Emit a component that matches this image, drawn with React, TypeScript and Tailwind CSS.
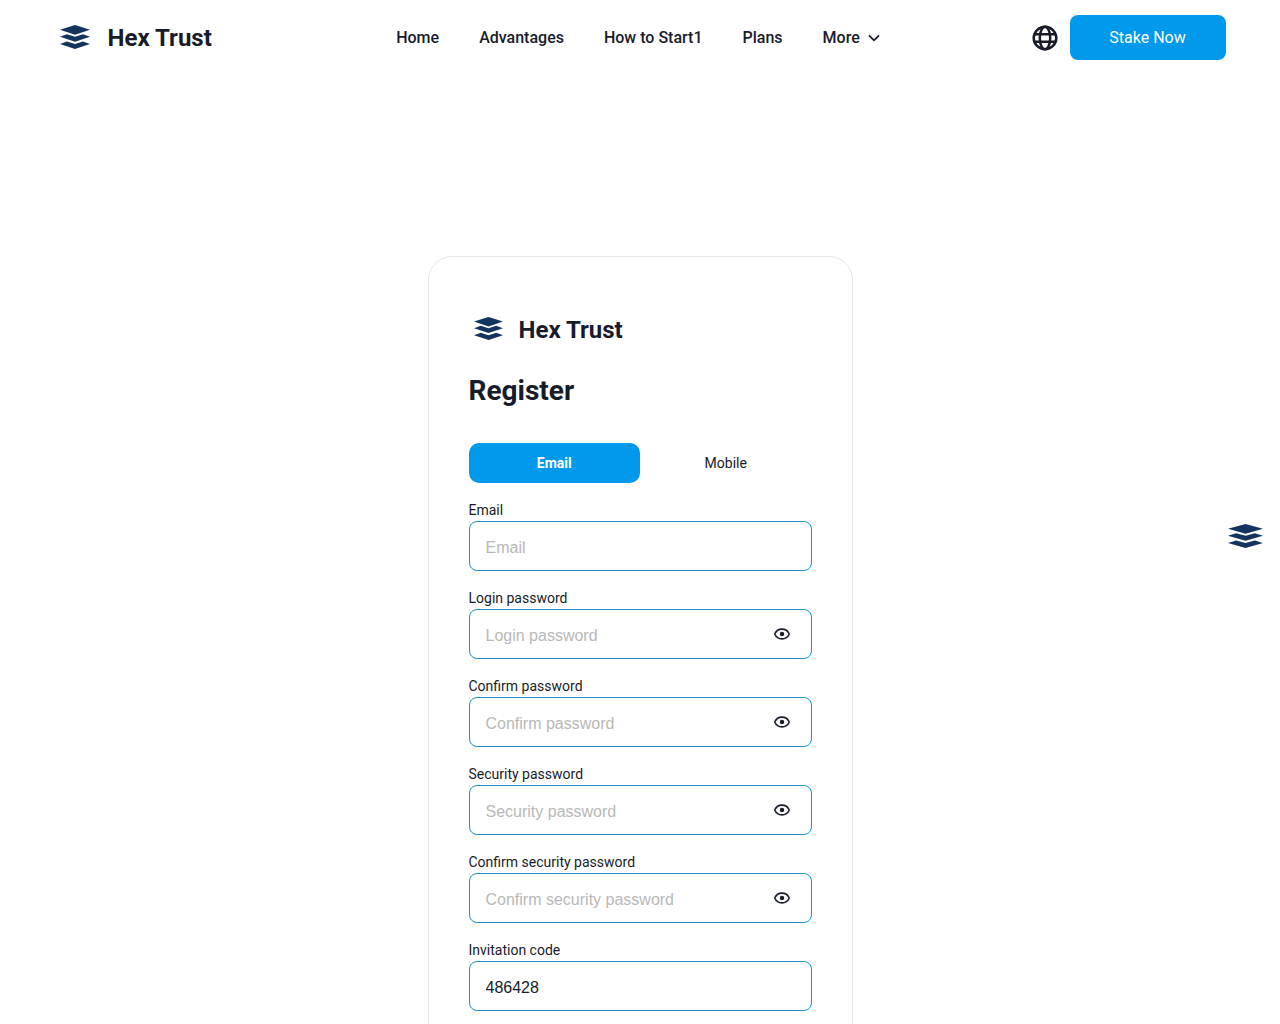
import clsx from "clsx";

const navLinks = ["Home", "Advantages", "How to Start1", "Plans"];

const fields = [
  { label: "Email", type: "text" },
  { label: "Login password", type: "password" },
  { label: "Confirm password", type: "password" },
  { label: "Security password", type: "password" },
  { label: "Confirm security password", type: "password" },
  { label: "Invitation code", type: "text", value: "486428" },
];

function LogoMark({ className }: { className?: string }) {
  return (
    <svg viewBox="0 0 30 24" preserveAspectRatio="none" fill="#15335f" className={className}>
      <path d="M15 0L30 4.8L15 9.8L0 4.8Z" />
      <path d="M0 11.8L7 9.2L15 11.8L23 9.2L30 11.8L15 16.8Z" />
      <path d="M0 19L7 16.4L15 19L23 16.4L30 19L15 24Z" />
    </svg>
  );
}

function GlobeIcon() {
  return (
    <svg width="26" height="26" viewBox="0 0 26 26" fill="none" stroke="#181b2a" strokeWidth="2.5">
      <circle cx="13" cy="13" r="11.3" />
      <ellipse cx="13" cy="13" rx="5.2" ry="11.3" />
      <path d="M2.4 9.2H23.6M2.4 16.8H23.6" />
    </svg>
  );
}

function EyeIcon() {
  return (
    <svg width="18" height="14" viewBox="0 0 18 14" fill="none">
      <path d="M1.7 7C3.2 3.8 5.9 2.1 9 2.1S14.8 3.8 16.3 7C14.8 10.2 12.1 11.9 9 11.9S3.2 10.2 1.7 7Z" stroke="#181b2a" strokeWidth="1.6" />
      <circle cx="9" cy="7" r="2.2" fill="#181b2a" />
    </svg>
  );
}

function Header() {
  return (
    <header className="flex h-[75px] items-center justify-between pl-[60px] pr-[54px]">
      <div className="flex w-[336px] items-center">
        <LogoMark className="mb-px h-6 w-[30px]" />
        <span className="ml-[17.6px] text-2xl font-bold">Hex Trust</span>
      </div>
      <nav className="flex flex-1 items-center gap-10 pl-[0.2px] text-base font-medium">
        {navLinks.map((link) => (
          <a key={link} href="#">
            {link}
          </a>
        ))}
        <button className="flex items-center gap-2 font-medium">
          More
          <svg width="12" height="8" viewBox="0 0 12 8" fill="none" stroke="#181b2a" strokeWidth="1.8">
            <path d="M1 1.3L6 6.3L11 1.3" />
          </svg>
        </button>
      </nav>
      <div className="flex items-center gap-3">
        <GlobeIcon />
        <button className="h-[45px] w-[156px] rounded-lg bg-[#0099eb] pr-px text-base text-white">Stake Now</button>
      </div>
    </header>
  );
}

export default function App() {
  return (
    <div className="h-[1024px] overflow-hidden bg-white font-[Roboto,sans-serif] text-[#181b2a]">
      <Header />

      <main className="mx-auto mt-[181px] h-[900px] w-[425px] rounded-3xl border border-[#e6e6e6] px-10 pt-[54px]">
        <div className="flex h-9 items-center pl-[5px]">
          <LogoMark className="mb-[2px] h-[23px] w-[29px]" />
          <span className="mt-[2px] ml-4 text-2xl font-bold">Hex Trust</span>
        </div>
        <h1 className="mt-[23px] text-[28px] leading-[42px] font-bold">Register</h1>

        {/* Account type */}
        <div className="mt-[31px] grid h-10 grid-cols-2 text-sm">
          <button className="rounded-[10px] bg-[#0099eb] font-bold text-white">Email</button>
          <button>Mobile</button>
        </div>

        <form className="mt-4">
          {fields.map((f) => (
            <div key={f.label} className="mb-4">
              <label className="block h-[22px] text-sm leading-[22px]">{f.label}</label>
              <div className="flex h-[50px] items-center rounded-lg border border-[#1792c9] pr-5 pl-4">
                <input
                  type={f.type}
                  placeholder={f.label}
                  defaultValue={f.value}
                  className={clsx(
                    "min-w-0 flex-1 pt-1 font-['Liberation_Sans',sans-serif] text-base outline-none",
                    "placeholder:text-[#b8b8b8]",
                  )}
                />
                {f.type === "password" && <EyeIcon />}
              </div>
            </div>
          ))}
        </form>
      </main>

      {/* Floating support button */}
      <button className="absolute top-[524px] right-[17px]">
        <LogoMark className="h-6 w-[35px]" />
      </button>
    </div>
  );
}
